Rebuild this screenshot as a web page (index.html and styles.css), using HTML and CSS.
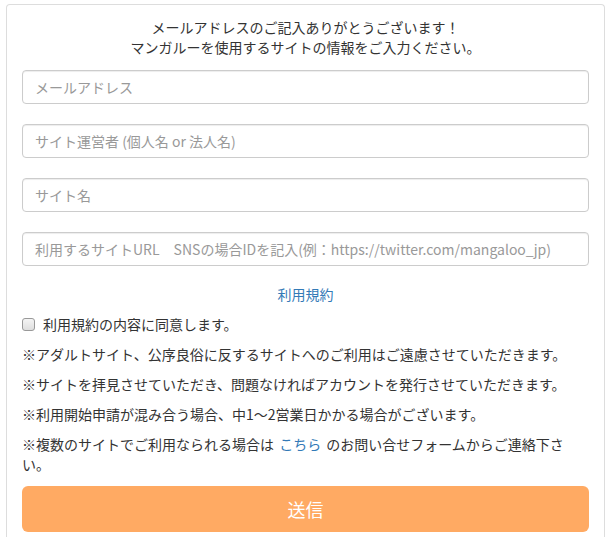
FILE: index.html
```html
<!DOCTYPE html>
<html lang="ja">
<head>
<meta charset="utf-8">
<title>サイト情報入力</title>
<link rel="stylesheet" href="styles.css">
</head>
<body>
<div class="card">
  <p class="lead">メールアドレスのご記入ありがとうございます！<br>マンガルーを使用するサイトの情報をご入力ください。</p>
  <form class="form">
    <input class="field" type="text" placeholder="メールアドレス">
    <input class="field" type="text" placeholder="サイト運営者 (個人名 or 法人名)">
    <input class="field" type="text" placeholder="サイト名">
    <input class="field" type="text" placeholder="利用するサイトURL&#12288;SNSの場合IDを記入(例：https://twitter.com/mangaloo_jp)">
    <div class="terms"><a href="#" class="link">利用規約</a></div>
    <label class="agree"><input type="checkbox" class="check"> 利用規約の内容に同意します。</label>
    <p class="note">※アダルトサイト、公序良俗に反するサイトへのご利用はご遠慮させていただきます。</p>
    <p class="note">※サイトを拝見させていただき、問題なければアカウントを発行させていただきます。</p>
    <p class="note">※利用開始申請が混み合う場合、中1〜2営業日かかる場合がございます。</p>
    <p class="note">※複数のサイトでご利用なられる場合は <a href="#" class="link">こちら</a> のお問い合せフォームからご連絡下さい。</p>
    <button type="button" class="submit">送信</button>
  </form>
</div>
</body>
</html>
```
FILE: styles.css
```css
* { box-sizing: border-box; }
html, body { margin: 0; padding: 0; background: #fff; }
body {
  font-family: "Noto Sans CJK JP", "Noto Sans", sans-serif;
  font-size: 14px;
  line-height: 20px;
  color: #333;
  padding: 4px 6px 0 6px;
}
.card {
  border: 1px solid #ddd;
  border-bottom: none;
  border-radius: 4px 4px 0 0;
  padding: 12px 15px 10px 15px;
  min-height: 540px;
}
.lead {
  margin: 0 0 13px 0;
  text-align: center;
}
.form {
  display: flex;
  flex-direction: column;
}
.field {
  display: block;
  width: 100%;
  height: 34px;
  padding: 6px 12px;
  margin: 0 0 20px 0;
  font: inherit;
  color: #555;
  border: 1px solid #ccc;
  border-radius: 4px;
  background: #fff;
  box-shadow: inset 0 1px 1px rgba(0,0,0,.075);
}
.field::placeholder { color: #999; }
.terms {
  text-align: center;
  margin: -2px 0 10px 0;
}
.link { color: #337ab7; text-decoration: none; }
.agree {
  display: flex;
  align-items: center;
  gap: 4px;
  margin: 0 0 10px 0;
}
.check {
  appearance: none;
  -webkit-appearance: none;
  width: 13px;
  height: 13px;
  margin: 0 4px 0 0;
  border: 1px solid #999;
  border-radius: 3px;
  background: linear-gradient(#f4f4f4, #dedede);
}
.note {
  margin: 0 0 10px 0;
  word-spacing: 2px;
}
.submit {
  display: block;
  width: 100%;
  height: 46px;
  margin-top: 2px;
  border: none;
  border-radius: 6px;
  background: #ffaa63;
  color: #fff;
  font: inherit;
  font-size: 18px;
}
```
